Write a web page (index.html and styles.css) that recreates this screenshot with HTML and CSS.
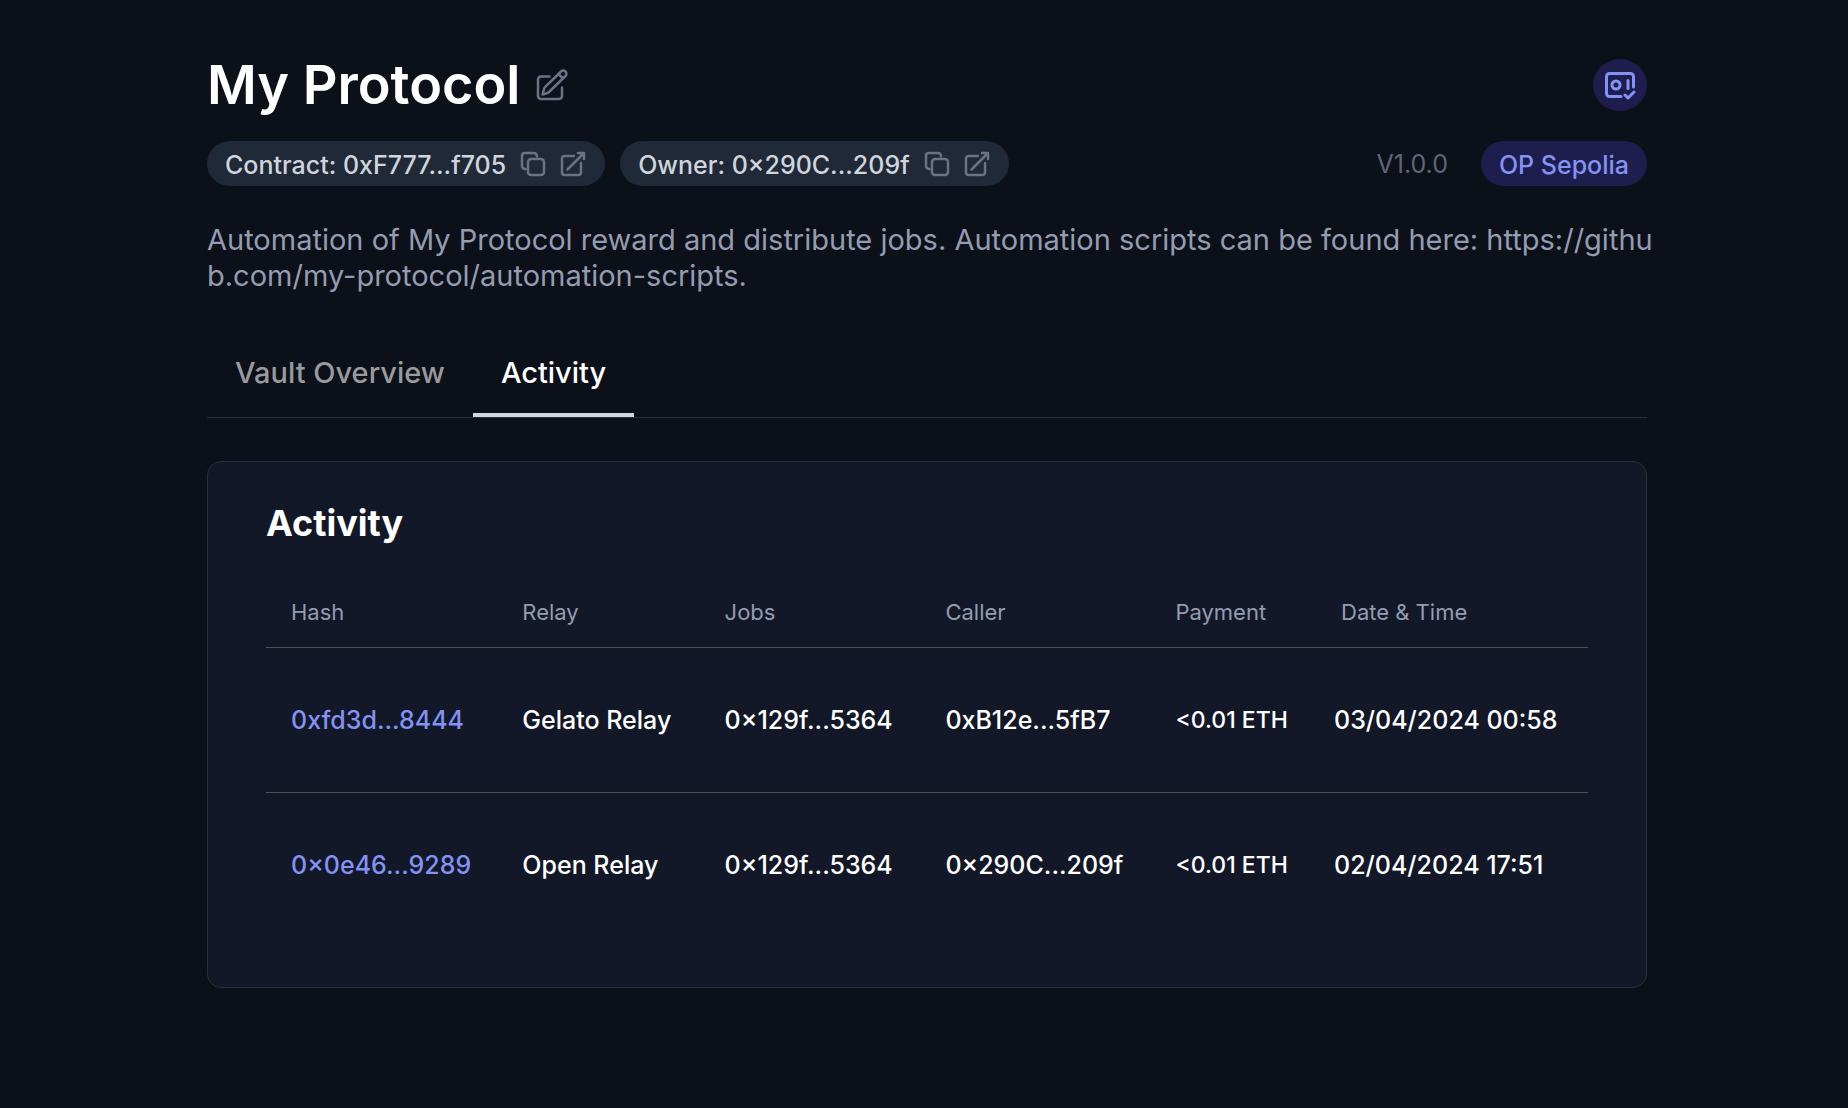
FILE: index.html
```html
<!DOCTYPE html>
<html lang="en">
<head>
  <meta charset="utf-8">
  <meta name="viewport" content="width=device-width, initial-scale=1">
  <title>My Protocol</title>
  <link rel="stylesheet" href="styles.css">
</head>
<body>
  <svg class="sprite" aria-hidden="true">
    <symbol id="icon-copy" viewBox="0 0 26 26">
      <rect x="8" y="8" width="16" height="16" rx="3"/>
      <path d="M5.500 18A3.200 3.200 0 0 1 2 15V4.800A2.800 2.800 0 0 1 4.800 2H14a3 3 0 0 1 3 3v.5"/>
    </symbol>
    <symbol id="icon-external" viewBox="0 0 26 26">
      <path d="M14 5H4.500A2.500 2.500 0 0 0 2 7.500V21.500A2.500 2.500 0 0 0 4.500 24H18.500A2.500 2.500 0 0 0 21 21.500V12"/>
      <path d="M7.500 18.500 23.500 2.500M18 2h6v6"/>
    </symbol>
  </svg>

  <main class="page">
    <header class="header">
      <div class="title-row">
        <h1 class="title">My Protocol</h1>
        <button class="icon-button" type="button" aria-label="Edit name">
          <svg class="icon icon-lg" viewBox="0 0 32 32">
            <path d="M13.500 7.500H5a3 3 0 0 0-3 3v16.500a3 3 0 0 0 3 3h18a3 3 0 0 0 3-3v-8.500"/>
            <path d="M6.500 25.500 8 20Q8.500 18.700 9.500 17.700L25 2.500a3.100 3.100 0 0 1 4.500 4.500L13.500 22.500Q12.500 23.500 11.500 24ZM22.500 5l4.500 4.500"/>
          </svg>
        </button>
        <button class="badge-button" type="button" aria-label="Vault certificate">
          <svg class="icon icon-lg icon-bold" viewBox="0 0 32 32">
            <path d="M17 27.500H5.500A3 3 0 0 1 2.500 24.500V7.500A3 3 0 0 1 5.500 4.500H26.500A3 3 0 0 1 29.500 7.500V18"/>
            <circle cx="12" cy="16" r="4"/>
            <path d="M24 11.500v8M21 26l3 3 6-6"/>
          </svg>
        </button>
      </div>

      <div class="meta-row">
        <div class="pill">
          <span class="pill-text">Contract: 0xF777...f705</span>
          <button class="icon-button" type="button" aria-label="Copy contract address"><svg class="icon"><use href="#icon-copy"/></svg></button>
          <a class="icon-button" href="#contract" aria-label="Open contract in explorer"><svg class="icon"><use href="#icon-external"/></svg></a>
        </div>
        <div class="pill">
          <span class="pill-text">Owner: 0×290C...209f</span>
          <button class="icon-button" type="button" aria-label="Copy owner address"><svg class="icon"><use href="#icon-copy"/></svg></button>
          <a class="icon-button" href="#owner" aria-label="Open owner in explorer"><svg class="icon"><use href="#icon-external"/></svg></a>
        </div>
        <span class="version">V1.0.0</span>
        <span class="pill pill-network"><span class="pill-text">OP Sepolia</span></span>
      </div>

      <p class="description">Automation of My Protocol reward and distribute jobs. Automation scripts can be found here: https://github.com/my-protocol/automation-scripts.</p>
    </header>

    <div class="tabs" role="tablist">
      <button class="tab" type="button" role="tab" aria-selected="false">Vault Overview</button>
      <button class="tab tab-active" type="button" role="tab" aria-selected="true">Activity</button>
    </div>

    <section class="card">
      <h2 class="card-title">Activity</h2>
      <table class="activity">
        <colgroup>
          <col class="col-hash"><col class="col-relay"><col class="col-jobs">
          <col class="col-caller"><col class="col-payment"><col class="col-date">
        </colgroup>
        <thead>
          <tr>
            <th scope="col">Hash</th>
            <th scope="col">Relay</th>
            <th scope="col">Jobs</th>
            <th scope="col">Caller</th>
            <th scope="col">Payment</th>
            <th scope="col" class="date-heading">Date &amp; Time</th>
          </tr>
        </thead>
        <tbody>
          <tr>
            <td><a class="hash" href="#tx-8444">0xfd3d...8444</a></td>
            <td>Gelato Relay</td>
            <td>0×129f...5364</td>
            <td>0xB12e...5fB7</td>
            <td class="payment">&lt;0.01 ETH</td>
            <td>03/04/2024 00:58</td>
          </tr>
          <tr>
            <td><a class="hash" href="#tx-9289">0×0e46...9289</a></td>
            <td>Open Relay</td>
            <td>0×129f...5364</td>
            <td>0×290C...209f</td>
            <td class="payment">&lt;0.01 ETH</td>
            <td>02/04/2024 17:51</td>
          </tr>
        </tbody>
      </table>
    </section>
  </main>
</body>
</html>
```
FILE: styles.css
```css
*,
*::before,
*::after {
  box-sizing: border-box;
}

body {
  margin: 0;
  padding-left: 6px;
  background: #0c1019;
  color: #ffffff;
  font-family: Inter, "Liberation Sans", sans-serif;
  font-size: 25px;
  font-weight: 500;
}

button {
  padding: 0;
  border: 0;
  background: none;
  color: inherit;
  font: inherit;
  cursor: pointer;
}

.sprite {
  display: none;
}

.page {
  width: 90%;
  max-width: 1440px;
  margin: 0 auto;
  padding: 53px 0 64px;
}

/* Header */

.title-row,
.meta-row,
.pill {
  display: flex;
  align-items: center;
}

.title-row {
  gap: 16px;
}

.title {
  margin: 0;
  font-size: 54px;
  line-height: 64px;
  font-weight: 600;
}

.icon-button {
  display: flex;
  color: #6b7285;
}

.icon {
  width: 26px;
  height: 26px;
  fill: none;
  stroke: currentColor;
  stroke-width: 2.5;
  stroke-linecap: round;
  stroke-linejoin: round;
}

.icon-lg {
  width: 32px;
  height: 32px;
}

.icon-bold {
  stroke-width: 3;
}

.badge-button {
  display: flex;
  align-items: center;
  justify-content: center;
  width: 54px;
  height: 52px;
  margin-left: auto;
  border-radius: 50%;
  background: #1e1e4e;
  color: #8492f4;
}

.meta-row {
  gap: 15px;
  margin-top: 24px;
}

.pill {
  gap: 14px;
  height: 45px;
  padding: 0 19px 0 18px;
  border-radius: 24px;
  background: #1f2937;
  color: #d1d5db;
  white-space: nowrap;
}

.pill-text {
  padding-top: 2px;
  line-height: 44px;
}

.pill-network {
  margin-left: 18px;
  padding: 0 18px;
  background: #1e1e4e;
  color: #8492f4;
}

.version {
  margin-left: auto;
  color: #5f6675;
  font-weight: 400;
}

.description {
  margin: 36px -8px 0 0;
  color: #949cb1;
  font-size: 29px;
  line-height: 36px;
  font-weight: 400;
  word-break: break-all;
}

/* Tabs */

.tabs {
  display: flex;
  margin-top: 34px;
  border-bottom: 1px solid #2a2d37;
}

.tab {
  padding: 22px 28px;
  border: solid transparent;
  border-width: 4px 0;
  color: #999a9e;
  font-size: 29px;
  line-height: 37px;
}

.tab-active {
  border-bottom-color: #d1d5db;
  color: #ffffff;
}

/* Activity card */

.card {
  margin-top: 43px;
  padding: 39px 58px 50px;
  border: 1px solid #2b2f3b;
  border-radius: 14px;
  background: #121827;
}

.card-title {
  margin: 0;
  font-size: 36px;
  line-height: 44px;
  font-weight: 700;
}

.activity {
  width: 100%;
  margin-top: 32px;
  border-spacing: 0;
  table-layout: fixed;
}

.activity th,
.activity td {
  padding: 0 0 0 25px;
  text-align: left;
  white-space: nowrap;
}

.activity th {
  height: 71px;
  border-bottom: 1px solid #4f4f4f;
  color: #949cb1;
  font-size: 22px;
  font-weight: 400;
}

.activity td {
  height: 144px;
}

.activity tr:not(:last-child) td {
  height: 145px;
  border-bottom: 1px solid #4f4f4f;
}

.activity .date-heading {
  padding-left: 32px;
}

.activity .payment {
  font-size: 23px;
}

.hash {
  color: #8492f4;
  text-decoration: none;
}

.col-hash { width: 17.5%; }
.col-relay { width: 15.3%; }
.col-jobs { width: 16.7%; }
.col-caller { width: 17.4%; }
.col-payment { width: 12%; }
.col-date { width: 21.1%; }
```
